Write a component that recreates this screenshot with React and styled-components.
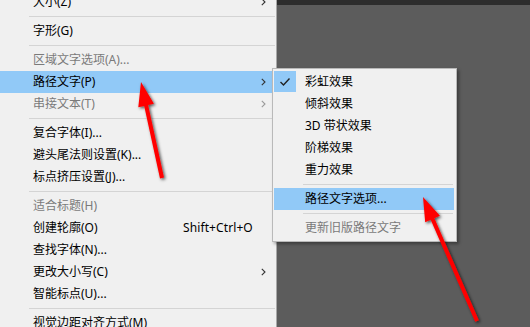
import React from "react";
import styled, { createGlobalStyle } from "styled-components";

const Global = createGlobalStyle`
  html, body { margin: 0; padding: 0; background: #5c5c5c; overflow: hidden; }
  * { box-sizing: border-box; }
`;

const Page = styled.div`
  position: relative;
  width: 530px;
  height: 327px;
  overflow: hidden;
  display: flex;
  font-family: "Noto Sans", "Noto Sans CJK SC", sans-serif;
  font-size: 12px;
  color: #000;
`;

const MainMenu = styled.div`
  width: 277px;
  flex: none;
  background: #f0f0f0;
  border-right: 1px solid #a8a8a8;
  display: flex;
  flex-direction: column;
  margin-top: -9px;
`;

const Workspace = styled.div`
  flex: 1;
  display: flex;
  flex-direction: column;
`;

const TopBar = styled.div`
  height: 5px;
  background: #2d2d2d;
`;

const Canvas = styled.div`
  flex: 1;
  background: #5c5c5c;
`;

const Row = styled.div`
  height: 22px;
  flex: none;
  display: grid;
  grid-template-columns: 150px 72px 1fr;
  align-items: center;
  padding-left: 33px;
  line-height: 22px;
  white-space: nowrap;
  background: ${(p) => (p.$active ? "#91c9f7" : "transparent")};
  color: ${(p) => (p.$disabled ? "#7a7a7a" : "#000")};
`;

const Shortcut = styled.span`
  letter-spacing: 0.1px;
`;

const ArrowCell = styled.span`
  display: flex;
  align-items: center;
  padding-left: 6px;
`;

const Sep = styled.div`
  height: 7px;
  flex: none;
  display: flex;
  align-items: center;
  padding-left: ${(p) => p.$indent}px;
  padding-right: ${(p) => p.$right || 1}px;
  &::after {
    content: "";
    display: block;
    width: 100%;
    height: 1px;
    background: #d4d4d4;
  }
`;

const SubMenu = styled.div`
  position: absolute;
  left: 272px;
  top: 68px;
  width: 185px;
  background: #f0f0f0;
  border: 1px solid #b9b9b9;
  box-shadow: 2px 2px 3px rgba(0, 0, 0, 0.35);
  padding: 2px 2px 2px 1px;
  display: flex;
  flex-direction: column;
`;

const SubRow = styled.div`
  height: 22px;
  display: grid;
  grid-template-columns: 22px 1fr;
  align-items: center;
  line-height: 22px;
  white-space: nowrap;
  background: ${(p) => (p.$active ? "#91c9f7" : "transparent")};
  color: ${(p) => (p.$disabled ? "#7a7a7a" : "#000")};
`;

const CheckCell = styled.span`
  height: 21px;
  align-self: start;
  display: flex;
  align-items: center;
  justify-content: center;
  background: ${(p) => (p.$checked ? "#91c9f7" : "transparent")};
`;

const SubLabel = styled.span`
  padding-left: 9px;
`;

const Overlay = styled.svg`
  position: absolute;
  left: 0;
  top: 0;
  width: 530px;
  height: 327px;
  pointer-events: none;
`;

const Chevron = ({ color }) => (
  <svg width="5" height="8" viewBox="0 0 5 8">
    <path d="M0.8 0.8 L4 4 L0.8 7.2" fill="none" stroke={color} strokeWidth="1.1" />
  </svg>
);

const mainItems = [
  { label: "大小(Z)", arrow: true },
  { sep: true },
  { label: "字形(G)" },
  { sep: true },
  { label: "区域文字选项(A)...", disabled: true },
  { label: "路径文字(P)", arrow: true, active: true },
  { label: "串接文本(T)", arrow: true, disabled: true },
  { sep: true },
  { label: "复合字体(I)..." },
  { label: "避头尾法则设置(K)..." },
  { label: "标点挤压设置(J)..." },
  { sep: true },
  { label: "适合标题(H)", disabled: true },
  { label: "创建轮廓(O)", shortcut: "Shift+Ctrl+O" },
  { label: "查找字体(N)..." },
  { label: "更改大小写(C)", arrow: true },
  { label: "智能标点(U)..." },
  { sep: true },
  { label: "视觉边距对齐方式(M)" },
];

const subItems = [
  { label: "彩虹效果", checked: true },
  { label: "倾斜效果" },
  { label: "3D 带状效果" },
  { label: "阶梯效果" },
  { label: "重力效果" },
  { sep: true },
  { label: "路径文字选项...", active: true },
  { sep: true },
  { label: "更新旧版路径文字", disabled: true },
];

function arrowShape(tail, tip, headLen = 24, halfW = 8, shaftW = 4) {
  const dx = tip[0] - tail[0];
  const dy = tip[1] - tail[1];
  const len = Math.hypot(dx, dy);
  const ux = dx / len, uy = dy / len;
  const nx = -uy, ny = ux;
  const bx = tip[0] - ux * headLen, by = tip[1] - uy * headLen;
  const s = shaftW / 2;
  const pts = [
    [tail[0] + nx * s, tail[1] + ny * s],
    [bx + nx * s, by + ny * s],
    [bx + nx * halfW, by + ny * halfW],
    tip,
    [bx - nx * halfW, by - ny * halfW],
    [bx - nx * s, by - ny * s],
    [tail[0] - nx * s, tail[1] - ny * s],
  ];
  return pts.map((p) => p.map((v) => v.toFixed(1)).join(",")).join(" ");
}

export default function App() {
  return (
    <>
      <Global />
      <Page>
        <MainMenu>
          {mainItems.map((it, i) =>
            it.sep ? (
              <Sep key={i} $indent={29} />
            ) : (
              <Row key={i} $active={it.active} $disabled={it.disabled}>
                <span>{it.label}</span>
                <Shortcut>{it.shortcut || ""}</Shortcut>
                <ArrowCell>
                  {it.arrow && <Chevron color={it.disabled ? "#9a9a9a" : "#333"} />}
                </ArrowCell>
              </Row>
            )
          )}
        </MainMenu>
        <Workspace>
          <TopBar />
          <Canvas />
        </Workspace>
        <SubMenu>
          {subItems.map((it, i) =>
            it.sep ? (
              <Sep key={i} $indent={29} $right={0} />
            ) : (
              <SubRow key={i} $active={it.active} $disabled={it.disabled}>
                <CheckCell $checked={it.checked}>
                  {it.checked && (
                    <svg width="12" height="10" viewBox="0 0 12 10">
                      <path d="M1.5 5 L4.5 8 L10.5 1.5" fill="none" stroke="#222" strokeWidth="1.4" />
                    </svg>
                  )}
                </CheckCell>
                <SubLabel>{it.label}</SubLabel>
              </SubRow>
            )
          )}
        </SubMenu>
        <Overlay viewBox="0 0 530 327">
          <defs>
            <filter id="sh" x="-50%" y="-50%" width="200%" height="200%">
              <feDropShadow dx="1.5" dy="1.5" stdDeviation="1.6" floodColor="#000" floodOpacity="0.65" />
            </filter>
          </defs>
          <polygon points={arrowShape([162, 178], [141, 82])} fill="#ff0000" filter="url(#sh)" />
          <polygon points={arrowShape([477, 321], [423, 197])} fill="#ff0000" filter="url(#sh)" />
        </Overlay>
      </Page>
    </>
  );
}
